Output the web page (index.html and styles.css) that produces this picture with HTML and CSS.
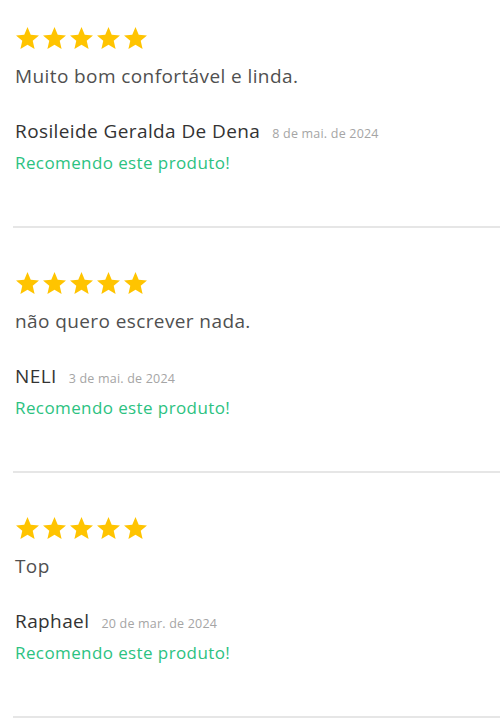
FILE: index.html
```html
<!DOCTYPE html>
<html lang="pt-BR">
<head>
    <meta charset="UTF-8">
    <link rel="stylesheet" href="styles.css">
</head>
<body>
    <div class="reviews">
        <div class="review">
            <div class="stars">
                <svg class="star" viewBox="2 2 20 19"><path d="M12 17.27L18.18 21l-1.64-7.03L22 9.24l-7.19-.61L12 2 9.19 8.63 2 9.24l5.46 4.73L5.82 21z"/></svg>
                <svg class="star" viewBox="2 2 20 19"><path d="M12 17.27L18.18 21l-1.64-7.03L22 9.24l-7.19-.61L12 2 9.19 8.63 2 9.24l5.46 4.73L5.82 21z"/></svg>
                <svg class="star" viewBox="2 2 20 19"><path d="M12 17.27L18.18 21l-1.64-7.03L22 9.24l-7.19-.61L12 2 9.19 8.63 2 9.24l5.46 4.73L5.82 21z"/></svg>
                <svg class="star" viewBox="2 2 20 19"><path d="M12 17.27L18.18 21l-1.64-7.03L22 9.24l-7.19-.61L12 2 9.19 8.63 2 9.24l5.46 4.73L5.82 21z"/></svg>
                <svg class="star" viewBox="2 2 20 19"><path d="M12 17.27L18.18 21l-1.64-7.03L22 9.24l-7.19-.61L12 2 9.19 8.63 2 9.24l5.46 4.73L5.82 21z"/></svg>
            </div>
            <p class="review-text">Muito bom confortável e linda.</p>
            <div class="review-meta">
                <span class="author">Rosileide Geralda De Dena</span>
                <span class="date">8 de mai. de 2024</span>
            </div>
            <div class="recommend">Recomendo este produto!</div>
        </div>

        <div class="review">
            <div class="stars">
                <svg class="star" viewBox="2 2 20 19"><path d="M12 17.27L18.18 21l-1.64-7.03L22 9.24l-7.19-.61L12 2 9.19 8.63 2 9.24l5.46 4.73L5.82 21z"/></svg>
                <svg class="star" viewBox="2 2 20 19"><path d="M12 17.27L18.18 21l-1.64-7.03L22 9.24l-7.19-.61L12 2 9.19 8.63 2 9.24l5.46 4.73L5.82 21z"/></svg>
                <svg class="star" viewBox="2 2 20 19"><path d="M12 17.27L18.18 21l-1.64-7.03L22 9.24l-7.19-.61L12 2 9.19 8.63 2 9.24l5.46 4.73L5.82 21z"/></svg>
                <svg class="star" viewBox="2 2 20 19"><path d="M12 17.27L18.18 21l-1.64-7.03L22 9.24l-7.19-.61L12 2 9.19 8.63 2 9.24l5.46 4.73L5.82 21z"/></svg>
                <svg class="star" viewBox="2 2 20 19"><path d="M12 17.27L18.18 21l-1.64-7.03L22 9.24l-7.19-.61L12 2 9.19 8.63 2 9.24l5.46 4.73L5.82 21z"/></svg>
            </div>
            <p class="review-text">não quero escrever nada.</p>
            <div class="review-meta">
                <span class="author">NELI</span>
                <span class="date">3 de mai. de 2024</span>
            </div>
            <div class="recommend">Recomendo este produto!</div>
        </div>

        <div class="review">
            <div class="stars">
                <svg class="star" viewBox="2 2 20 19"><path d="M12 17.27L18.18 21l-1.64-7.03L22 9.24l-7.19-.61L12 2 9.19 8.63 2 9.24l5.46 4.73L5.82 21z"/></svg>
                <svg class="star" viewBox="2 2 20 19"><path d="M12 17.27L18.18 21l-1.64-7.03L22 9.24l-7.19-.61L12 2 9.19 8.63 2 9.24l5.46 4.73L5.82 21z"/></svg>
                <svg class="star" viewBox="2 2 20 19"><path d="M12 17.27L18.18 21l-1.64-7.03L22 9.24l-7.19-.61L12 2 9.19 8.63 2 9.24l5.46 4.73L5.82 21z"/></svg>
                <svg class="star" viewBox="2 2 20 19"><path d="M12 17.27L18.18 21l-1.64-7.03L22 9.24l-7.19-.61L12 2 9.19 8.63 2 9.24l5.46 4.73L5.82 21z"/></svg>
                <svg class="star" viewBox="2 2 20 19"><path d="M12 17.27L18.18 21l-1.64-7.03L22 9.24l-7.19-.61L12 2 9.19 8.63 2 9.24l5.46 4.73L5.82 21z"/></svg>
            </div>
            <p class="review-text">Top</p>
            <div class="review-meta">
                <span class="author">Raphael</span>
                <span class="date">20 de mar. de 2024</span>
            </div>
            <div class="recommend">Recomendo este produto!</div>
        </div>
    </div>
</body>
</html>
```

FILE: styles.css
```css
body {
    margin: 0;
    background: #fff;
    font-family: "Open Sans", sans-serif;
    color: #444;
    overflow: hidden;
}

/* list is scrolled a little, first review starts above the fold */
.reviews {
    margin-top: -17px;
    padding-left: 13px;
}

.review {
    height: 245px;
    padding: 44px 0 0 2px;
    box-sizing: border-box;
    border-bottom: 2px solid #e6e6e6;
}

.stars {
    display: flex;
    gap: 4px;
    padding-left: 1px;
}

.star {
    width: 23px;
    height: 22px;
    fill: #ffc400;
}

.review-text {
    margin: 15px 0 0;
    font-size: 19px;
    line-height: 24px;
    letter-spacing: 0.4px;
    color: #505050;
}

.review-meta {
    display: flex;
    align-items: baseline;
    gap: 12px;
    margin-top: 31px;
    height: 24px;
}

.author {
    font-size: 19px;
    line-height: 24px;
    letter-spacing: 0.4px;
    color: #333;
}

.date {
    font-size: 12.5px;
    letter-spacing: 0.2px;
    color: #a5a5a5;
}

.recommend {
    margin-top: 9px;
    font-size: 17px;
    line-height: 22px;
    letter-spacing: 0.4px;
    color: #2cc281;
}
```
